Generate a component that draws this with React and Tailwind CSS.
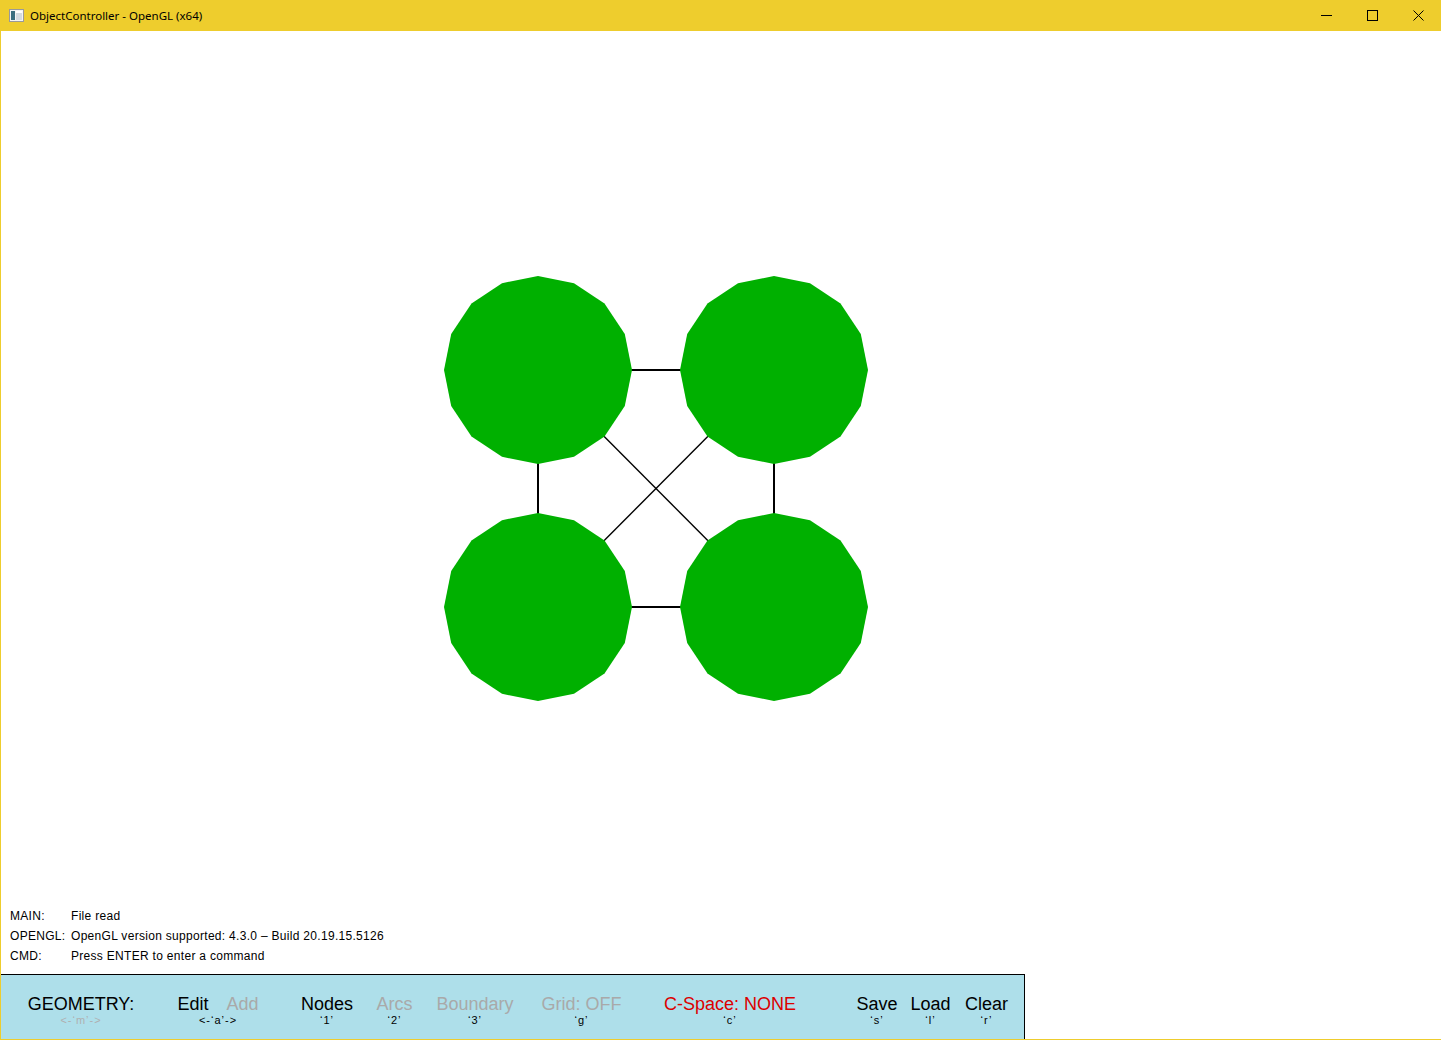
import React from "react";

// 16-sided "circle" as drawn by the GL app
function nodePoints(cx, cy, r) {
  const pts = [];
  for (let i = 0; i < 16; i++) {
    const a = (i * Math.PI * 2) / 16;
    pts.push(`${(cx + r * Math.sin(a)).toFixed(1)},${(cy - r * Math.cos(a)).toFixed(1)}`);
  }
  return pts.join(" ");
}

const NODES = [
  [538, 370],
  [774, 370],
  [538, 607],
  [774, 607],
];

const TOOLS = [
  { ml: "ml-[26px]", w: "w-[108px]", parts: [["GEOMETRY:", "text-black"]], key: "<-‘m’->", keyColor: "text-[#b0b0b0]" },
  { ml: "ml-[41px]", w: "w-[84px]", parts: [["Edit", "text-black"], ["Add", "text-[#a9a9a9]"]], key: "<-‘a’->", keyColor: "text-black" },
  { ml: "ml-[40px]", w: "w-[54px]", parts: [["Nodes", "text-black"]], key: "‘1’", keyColor: "text-black" },
  { ml: "ml-[22px]", w: "w-[37px]", parts: [["Arcs", "text-[#a9a9a9]"]], key: "‘2’", keyColor: "text-black" },
  { ml: "ml-[22px]", w: "w-[80px]", parts: [["Boundary", "text-[#a9a9a9]"]], key: "‘3’", keyColor: "text-black" },
  { ml: "ml-[26px]", w: "w-[81px]", parts: [["Grid: OFF", "text-[#a9a9a9]"]], key: "‘g’", keyColor: "text-black" },
  { ml: "ml-[38px]", w: "w-[140px]", parts: [["C-Space: NONE", "text-[#dd0000]"]], key: "‘c’", keyColor: "text-black" },
  { ml: "ml-[56px]", w: "w-[42px]", parts: [["Save", "text-black"]], key: "‘s’", keyColor: "text-black" },
  { ml: "ml-[12px]", w: "w-[41px]", parts: [["Load", "text-black"]], key: "‘l’", keyColor: "text-black" },
  { ml: "ml-[14px]", w: "w-[43px]", parts: [["Clear", "text-black"]], key: "‘r’", keyColor: "text-black" },
];

const STATUS = [
  ["MAIN:", "File read"],
  ["OPENGL:", "OpenGL version supported: 4.3.0 – Build 20.19.15.5126"],
  ["CMD:", "Press ENTER to enter a command"],
];

function TitleBar() {
  return (
    <div className="h-[31px] shrink-0 bg-[#eecd2d] flex items-center">
      <svg width="15" height="13" viewBox="0 0 15 13" className="ml-[9px] mb-[1px]">
        <rect x="0.5" y="0.5" width="14" height="12" fill="#f4f4f4" stroke="#9a9a9a" />
        <rect x="2" y="2" width="4" height="9" fill="#3b6f80" />
        <rect x="7" y="2" width="6" height="9" fill="#d5dbe0" />
        <rect x="7" y="2" width="6" height="2" fill="#ffffff" />
      </svg>
      <span className="ml-[6px] text-[11.5px] text-black font-['Noto_Sans',sans-serif] leading-none">
        ObjectController - OpenGL (x64)
      </span>
      <div className="ml-auto flex h-full">
        <div className="w-[46px] h-full flex items-center justify-center">
          <svg width="11" height="11" viewBox="0 0 11 11">
            <line x1="0" y1="5.5" x2="11" y2="5.5" stroke="#000" strokeWidth="1" />
          </svg>
        </div>
        <div className="w-[46px] h-full flex items-center justify-center">
          <svg width="11" height="11" viewBox="0 0 11 11">
            <rect x="0.5" y="0.5" width="10" height="10" fill="none" stroke="#000" strokeWidth="1" />
          </svg>
        </div>
        <div className="w-[46px] h-full flex items-center justify-center">
          <svg width="11" height="11" viewBox="0 0 11 11">
            <path d="M0.5 0.5 L10.5 10.5 M10.5 0.5 L0.5 10.5" stroke="#000" strokeWidth="1" />
          </svg>
        </div>
      </div>
    </div>
  );
}

function Canvas() {
  return (
    <div className="flex-1 min-h-0">
      <svg width="1440" height="875" viewBox="1 31 1440 875" className="block">
        <g stroke="#000" strokeWidth="2">
          <line x1="538" y1="370" x2="774" y2="370" />
          <line x1="538" y1="607" x2="774" y2="607" />
          <line x1="538" y1="370" x2="538" y2="607" />
          <line x1="774" y1="370" x2="774" y2="607" />
        </g>
        <g stroke="#000" strokeWidth="1.4">
          <line x1="538" y1="370" x2="774" y2="607" />
          <line x1="774" y1="370" x2="538" y2="607" />
        </g>
        {NODES.map(([x, y]) => (
          <polygon key={`${x}-${y}`} points={nodePoints(x, y, 94)} fill="#00b000" />
        ))}
      </svg>
    </div>
  );
}

function Toolbar() {
  return (
    <div className="w-[1024px] h-[65px] shrink-0 bg-[#aedfea] border-t border-r border-black flex pt-[21px] font-['Liberation_Sans',Arial,sans-serif]">
      {TOOLS.map((t) => (
        <div key={t.key + t.parts[0][0]} className={`${t.ml} ${t.w} shrink-0 flex flex-col items-center`}>
          <div className="flex gap-[18px] text-[18px] leading-[16px] whitespace-nowrap">
            {t.parts.map(([label, color]) => (
              <span key={label} className={color}>
                {label}
              </span>
            ))}
          </div>
          <div className={`mt-[3px] text-[11px] leading-[10px] tracking-[1px] whitespace-nowrap ${t.keyColor}`}>
            {t.key}
          </div>
        </div>
      ))}
    </div>
  );
}

export default function App() {
  return (
    <div className="w-full h-[1040px] flex flex-col bg-white overflow-hidden">
      <TitleBar />
      <div className="flex-1 min-h-0 flex flex-col border-l border-b border-[#eecd2d]">
        <Canvas />
        <div className="h-[60px] shrink-0 pl-[9px] font-['Liberation_Sans',Arial,sans-serif] text-[12px] tracking-[0.3px] text-black">
          {STATUS.map(([k, v]) => (
            <div key={k} className="flex h-[20px] leading-[20px]">
              <span className="w-[61px]">{k}</span>
              <span>{v}</span>
            </div>
          ))}
        </div>
        <div className="h-[8px] shrink-0" />
        <Toolbar />
      </div>
    </div>
  );
}
